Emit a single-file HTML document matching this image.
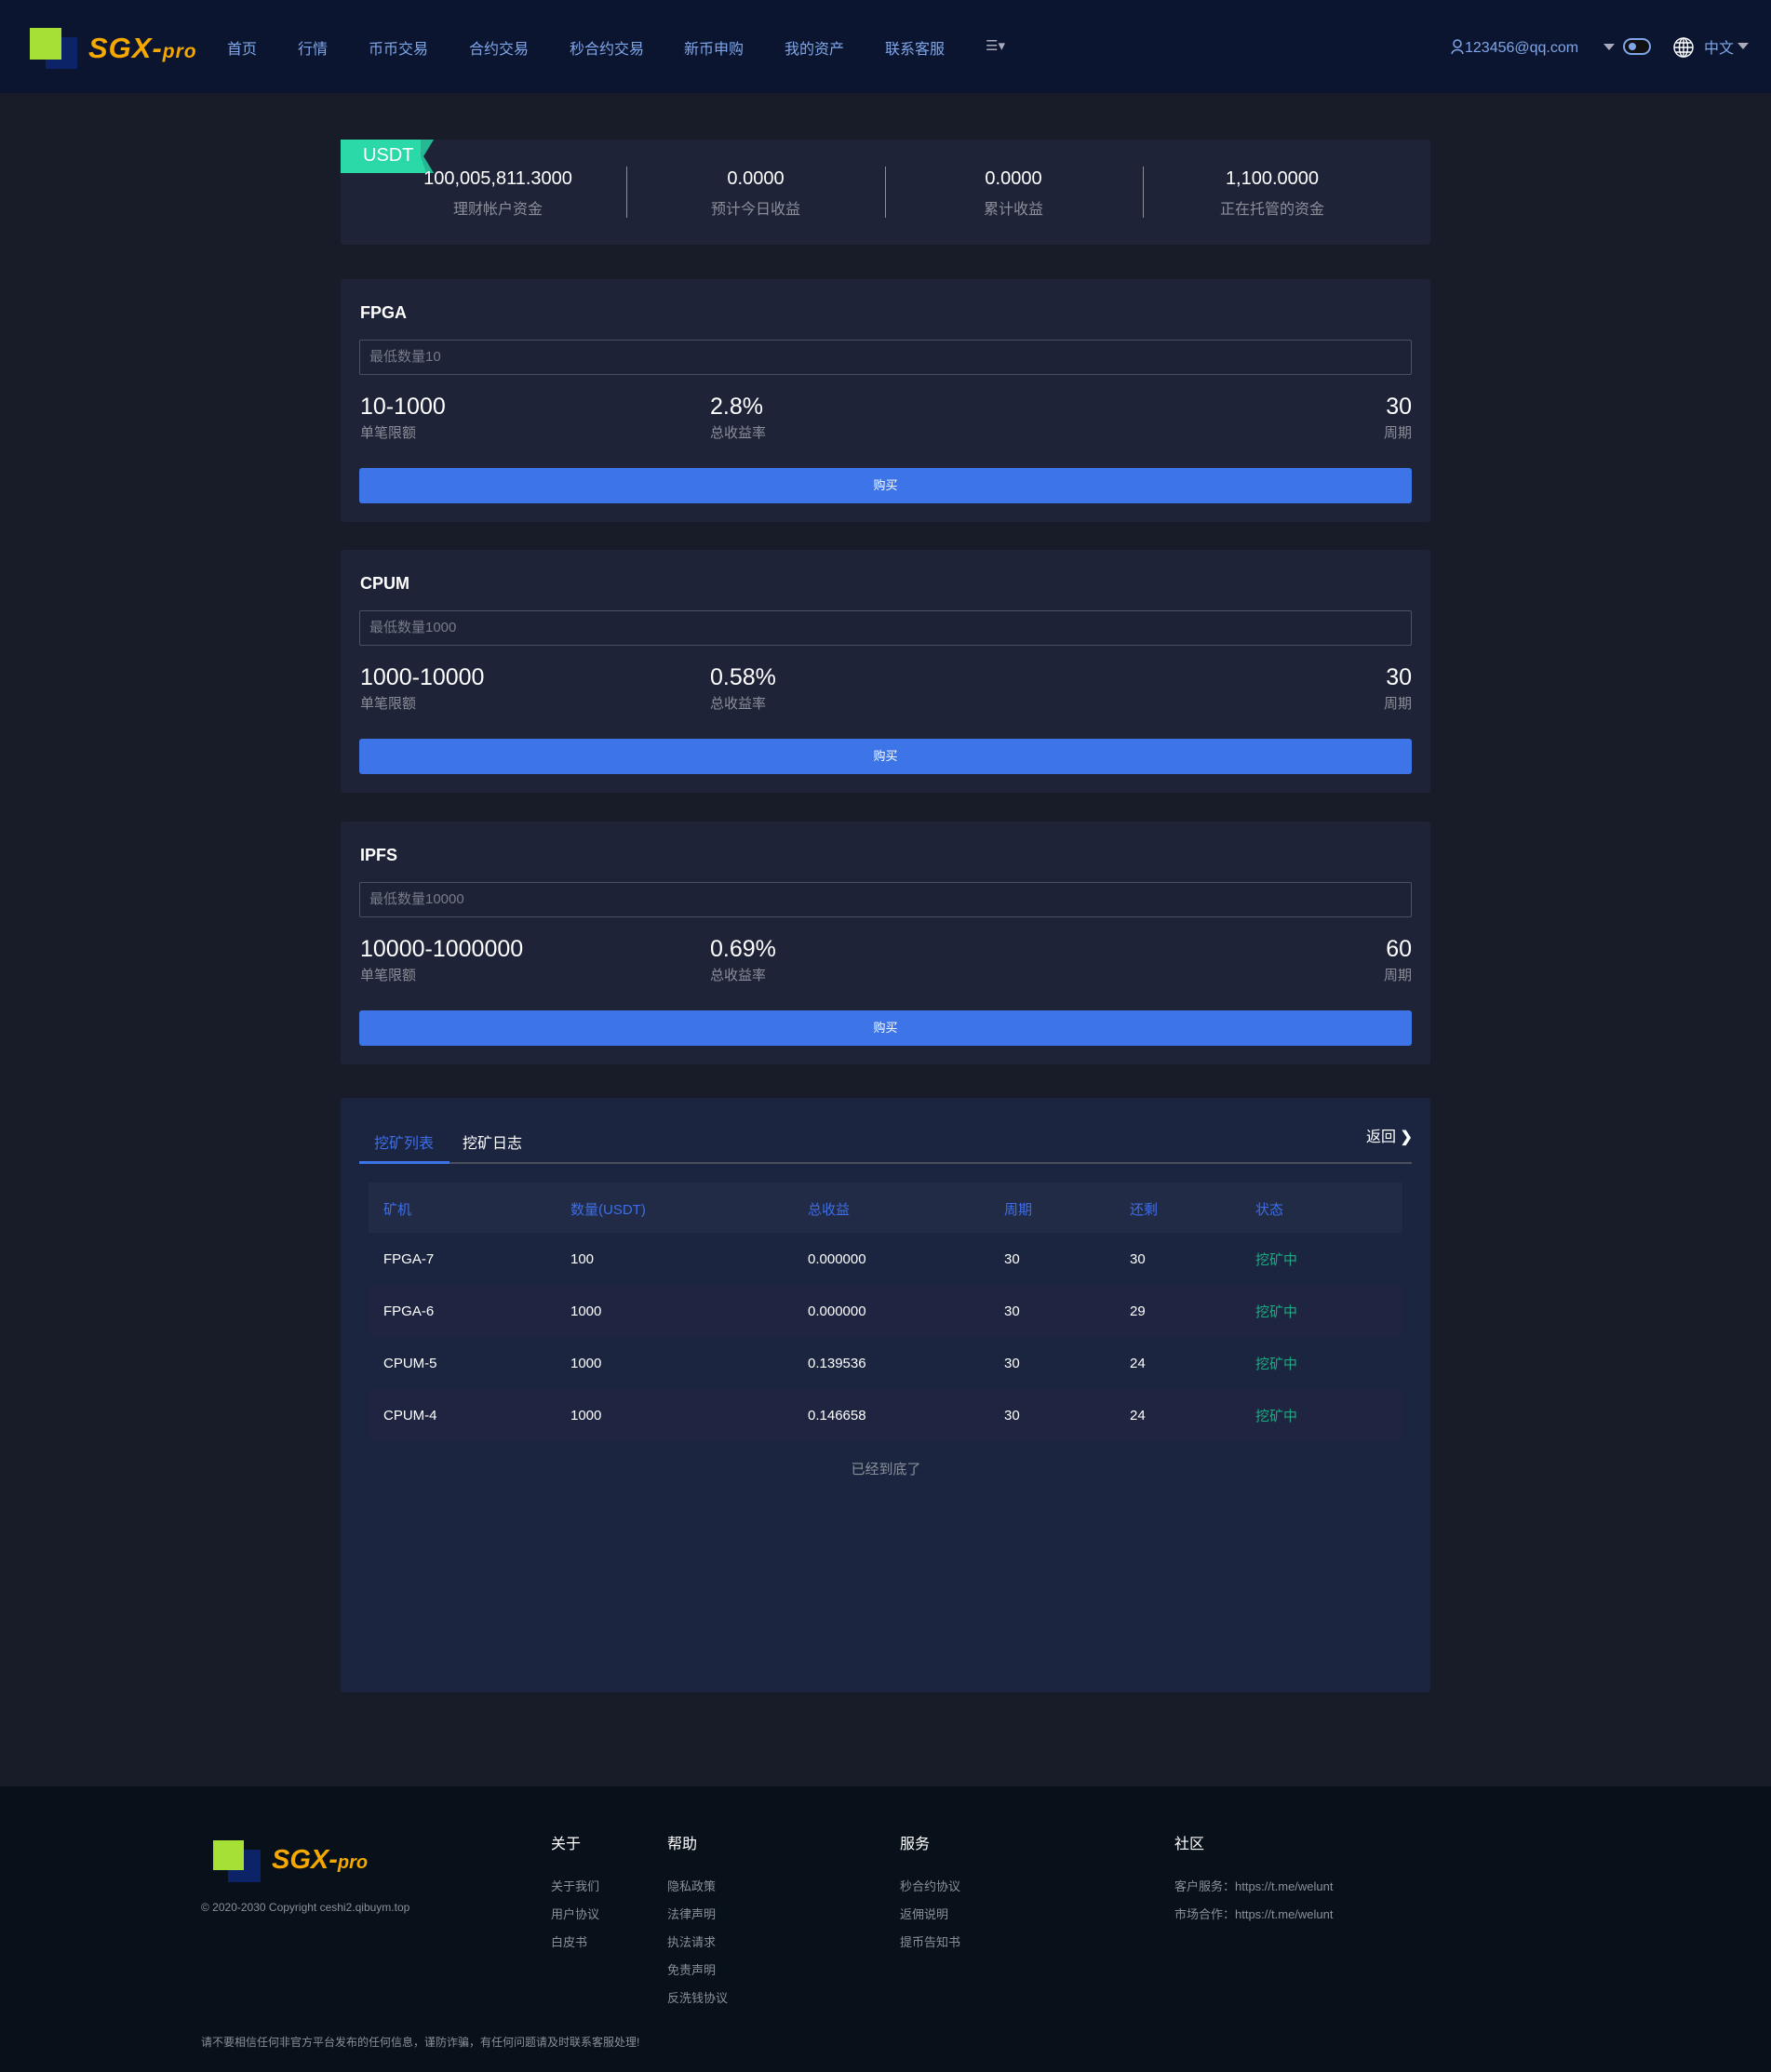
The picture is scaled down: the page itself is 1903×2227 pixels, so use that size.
<!DOCTYPE html>
<html><head><meta charset="utf-8"><style>
*{margin:0;padding:0;box-sizing:border-box}
body{width:1903px;height:2227px;background:#171c28;font-family:"Liberation Sans","Noto Sans CJK SC",sans-serif;color:#fff;position:relative;overflow:hidden}
.abs{position:absolute}
.hdr{left:0;top:0;width:1903px;height:100px;background:#0b1530}
.nav{top:39px;font-size:16px;color:#7fa6e8;white-space:nowrap}
.card{background:#1e2338;border-radius:3px}
.val{font-size:20px;color:#fff;text-align:center;width:260px}
.lbl{font-size:16px;color:#8a8f99;text-align:center;width:260px}
.div{width:1px;height:55px;background:#8a8f99;top:179px}
.title{font-size:18px;font-weight:bold}
.inp{border:1px solid #4a5068;background:#1d2236;border-radius:2px;font-size:15px;color:#777c88;padding-left:10px;line-height:36px}
.big{font-size:25px}
.small{font-size:15px;color:#8a8f99}
.btn{background:#3d74e8;border-radius:3px;text-align:center;color:#fff;font-size:13px;line-height:38px}
.th{font-size:15px;color:#3d6ee8;top:1289px}
.td{font-size:15px;color:#fff}
.g{color:#1fa882;margin-top:-2px}
.fh{font-size:16px;color:#fff;top:1968px}
.fl{font-size:13px;color:#8a9099}
</style></head><body>
<div class="abs hdr"></div>
<div class="abs" style="left:32px;top:30px;width:34px;height:34px;background:#a6df35"></div>
<div class="abs" style="left:49px;top:64px;width:34px;height:10px;background:#0c2368"></div>
<div class="abs" style="left:66px;top:40px;width:17px;height:34px;background:#0c2368"></div>
<div class="abs" style="left:95px;top:34px;font-size:31px;font-weight:bold;font-style:italic;color:#f5a800;letter-spacing:1px">SGX-<span style="font-size:21px">pro</span></div>
<div class="abs nav" style="left:244px">首页</div>
<div class="abs nav" style="left:320px">行情</div>
<div class="abs nav" style="left:396px">币币交易</div>
<div class="abs nav" style="left:504px">合约交易</div>
<div class="abs nav" style="left:612px">秒合约交易</div>
<div class="abs nav" style="left:735px">新币申购</div>
<div class="abs nav" style="left:843px">我的资产</div>
<div class="abs nav" style="left:951px">联系客服</div>
<div class="abs nav" style="left:1059px;color:#aab;font-size:15px;top:40px">☰▾</div>
<svg class="abs" style="left:1559px;top:42px" width="14" height="17" viewBox="0 0 14 17"><circle cx="7" cy="5" r="4" fill="none" stroke="#7fa6e8" stroke-width="1.5"/><path d="M1 16 C2 10 12 10 13 16" fill="none" stroke="#7fa6e8" stroke-width="1.5"/></svg>
<div class="abs nav" style="left:1574px;top:43px;font-size:16px">123456@qq.com</div>
<div class="abs" style="left:1723px;top:47px;width:0;height:0;border-left:6px solid transparent;border-right:6px solid transparent;border-top:7px solid #aab"></div>
<div class="abs" style="left:1744px;top:41px;width:30px;height:18px;border:2px solid #7fa6e8;border-radius:9px;background:#111"><div style="position:absolute;left:4px;top:3px;width:8px;height:8px;border-radius:50%;background:#7fa6e8"></div></div>
<svg class="abs" style="left:1798px;top:40px" width="22" height="22" viewBox="0 0 22 22" fill="none" stroke="#fff" stroke-width="1.4"><circle cx="11" cy="11" r="10"/><ellipse cx="11" cy="11" rx="4.5" ry="10"/><path d="M1 11H21M3 6H19M3 16H19M11 1V21"/></svg>
<div class="abs nav" style="left:1831px;top:38px;font-size:16px">中文</div>
<div class="abs" style="left:1867px;top:46px;width:0;height:0;border-left:6px solid transparent;border-right:6px solid transparent;border-top:7px solid #aab"></div>

<div class="abs card" style="left:366px;top:150px;width:1171px;height:113px"></div>
<svg class="abs" style="left:366px;top:150px" width="100" height="36"><polygon points="0,0 100,0 89,18 100,36 0,36" fill="#2bd8a8"/><polygon points="86,0 100,0 89,18 100,36 92,36 86,18" fill="#25b892"/></svg>
<div class="abs" style="left:390px;top:156px;font-size:20px;color:#fff">USDT</div>
<div class="abs val" style="left:405px;top:181px">100,005,811.3000</div>
<div class="abs lbl" style="left:405px;top:211px">理财帐户资金</div>
<div class="abs val" style="left:682px;top:181px">0.0000</div>
<div class="abs lbl" style="left:682px;top:211px">预计今日收益</div>
<div class="abs val" style="left:959px;top:181px">0.0000</div>
<div class="abs lbl" style="left:959px;top:211px">累计收益</div>
<div class="abs val" style="left:1237px;top:181px">1,100.0000</div>
<div class="abs lbl" style="left:1237px;top:211px">正在托管的资金</div>
<div class="abs div" style="left:673px"></div>
<div class="abs div" style="left:951px"></div>
<div class="abs div" style="left:1228px"></div>

<div class="abs card" style="left:366px;top:300px;width:1171px;height:261px"></div>
<div class="abs title" style="left:387px;top:326px">FPGA</div>
<div class="abs inp" style="left:386px;top:365px;width:1131px;height:38px">最低数量10</div>
<div class="abs big" style="left:387px;top:423px">10-1000</div>
<div class="abs small" style="left:387px;top:454px">单笔限额</div>
<div class="abs big" style="left:763px;top:423px">2.8%</div>
<div class="abs small" style="left:763px;top:454px">总收益率</div>
<div class="abs big" style="left:1417px;top:423px;width:100px;text-align:right">30</div>
<div class="abs small" style="left:1417px;top:454px;width:100px;text-align:right">周期</div>
<div class="abs btn" style="left:386px;top:503px;width:1131px;height:38px">购买</div>

<div class="abs card" style="left:366px;top:591px;width:1171px;height:261px"></div>
<div class="abs title" style="left:387px;top:617px">CPUM</div>
<div class="abs inp" style="left:386px;top:656px;width:1131px;height:38px">最低数量1000</div>
<div class="abs big" style="left:387px;top:714px">1000-10000</div>
<div class="abs small" style="left:387px;top:745px">单笔限额</div>
<div class="abs big" style="left:763px;top:714px">0.58%</div>
<div class="abs small" style="left:763px;top:745px">总收益率</div>
<div class="abs big" style="left:1417px;top:714px;width:100px;text-align:right">30</div>
<div class="abs small" style="left:1417px;top:745px;width:100px;text-align:right">周期</div>
<div class="abs btn" style="left:386px;top:794px;width:1131px;height:38px">购买</div>

<div class="abs card" style="left:366px;top:883px;width:1171px;height:261px"></div>
<div class="abs title" style="left:387px;top:909px">IPFS</div>
<div class="abs inp" style="left:386px;top:948px;width:1131px;height:38px">最低数量10000</div>
<div class="abs big" style="left:387px;top:1006px">10000-1000000</div>
<div class="abs small" style="left:387px;top:1037px">单笔限额</div>
<div class="abs big" style="left:763px;top:1006px">0.69%</div>
<div class="abs small" style="left:763px;top:1037px">总收益率</div>
<div class="abs big" style="left:1417px;top:1006px;width:100px;text-align:right">60</div>
<div class="abs small" style="left:1417px;top:1037px;width:100px;text-align:right">周期</div>
<div class="abs btn" style="left:386px;top:1086px;width:1131px;height:38px">购买</div>

<div class="abs" style="left:366px;top:1180px;width:1171px;height:639px;background:#1b2540;border-radius:3px"></div>
<div class="abs" style="left:402px;top:1215px;font-size:16px;color:#3d6ee8">挖矿列表</div>
<div class="abs" style="left:497px;top:1215px;font-size:16px;color:#fff">挖矿日志</div>
<div class="abs" style="left:1468px;top:1208px;font-size:16px;color:#fff">返回 <b>❯</b></div>
<div class="abs" style="left:386px;top:1249px;width:1131px;height:2px;background:#4a4f5c"></div>
<div class="abs" style="left:386px;top:1248px;width:97px;height:3px;background:#3d74e8"></div>
<div class="abs" style="left:396px;top:1271px;width:1111px;height:54px;background:#222b45"></div>
<div class="abs" style="left:396px;top:1381px;width:1111px;height:56px;background:#1f2540"></div>
<div class="abs" style="left:396px;top:1493px;width:1111px;height:56px;background:#1f2540"></div>
<div class="abs th" style="left:412px">矿机</div>
<div class="abs th" style="left:613px">数量(USDT)</div>
<div class="abs th" style="left:868px">总收益</div>
<div class="abs th" style="left:1079px">周期</div>
<div class="abs th" style="left:1214px">还剩</div>
<div class="abs th" style="left:1349px">状态</div>

<div class="abs td" style="left:412px;top:1345px">FPGA-7</div><div class="abs td" style="left:613px;top:1345px">100</div><div class="abs td" style="left:868px;top:1345px">0.000000</div><div class="abs td" style="left:1079px;top:1345px">30</div><div class="abs td" style="left:1214px;top:1345px">30</div><div class="abs td g" style="left:1349px;top:1345px">挖矿中</div>
<div class="abs td" style="left:412px;top:1401px">FPGA-6</div><div class="abs td" style="left:613px;top:1401px">1000</div><div class="abs td" style="left:868px;top:1401px">0.000000</div><div class="abs td" style="left:1079px;top:1401px">30</div><div class="abs td" style="left:1214px;top:1401px">29</div><div class="abs td g" style="left:1349px;top:1401px">挖矿中</div>
<div class="abs td" style="left:412px;top:1457px">CPUM-5</div><div class="abs td" style="left:613px;top:1457px">1000</div><div class="abs td" style="left:868px;top:1457px">0.139536</div><div class="abs td" style="left:1079px;top:1457px">30</div><div class="abs td" style="left:1214px;top:1457px">24</div><div class="abs td g" style="left:1349px;top:1457px">挖矿中</div>
<div class="abs td" style="left:412px;top:1513px">CPUM-4</div><div class="abs td" style="left:613px;top:1513px">1000</div><div class="abs td" style="left:868px;top:1513px">0.146658</div><div class="abs td" style="left:1079px;top:1513px">30</div><div class="abs td" style="left:1214px;top:1513px">24</div><div class="abs td g" style="left:1349px;top:1513px">挖矿中</div>
<div class="abs" style="left:852px;top:1568px;width:200px;text-align:center;font-size:15px;color:#8a8f99">已经到底了</div>

<div class="abs" style="left:0;top:1920px;width:1903px;height:307px;background:#08111a"></div>
<div class="abs" style="left:229px;top:1978px;width:33px;height:32px;background:#a6df35"></div>
<div class="abs" style="left:245px;top:2010px;width:35px;height:13px;background:#0c2368"></div>
<div class="abs" style="left:262px;top:1988px;width:18px;height:22px;background:#0c2368"></div>
<div class="abs" style="left:292px;top:1983px;font-size:29px;font-weight:bold;font-style:italic;color:#f5a800">SGX-<span style="font-size:20px">pro</span></div>
<div class="abs" style="left:216px;top:2043px;font-size:12px;color:#8a9099">© 2020-2030 Copyright ceshi2.qibuym.top</div>
<div class="abs fh" style="left:592px">关于</div>
<div class="abs fh" style="left:717px">帮助</div>
<div class="abs fh" style="left:967px">服务</div>
<div class="abs fh" style="left:1262px">社区</div>
<div class="abs fl" style="left:592px;top:2013px;line-height:30px">关于我们<br>用户协议<br>白皮书</div>
<div class="abs fl" style="left:717px;top:2013px;line-height:30px">隐私政策<br>法律声明<br>执法请求<br>免责声明<br>反洗钱协议</div>
<div class="abs fl" style="left:967px;top:2013px;line-height:30px">秒合约协议<br>返佣说明<br>提币告知书</div>
<div class="abs fl" style="left:1262px;top:2013px;line-height:30px">客户服务：https://t.me/welunt<br>市场合作：https://t.me/welunt</div>
<div class="abs" style="left:216px;top:2186px;font-size:12px;color:#8a9099">请不要相信任何非官方平台发布的任何信息，谨防诈骗，有任何问题请及时联系客服处理!</div>
</body></html>
